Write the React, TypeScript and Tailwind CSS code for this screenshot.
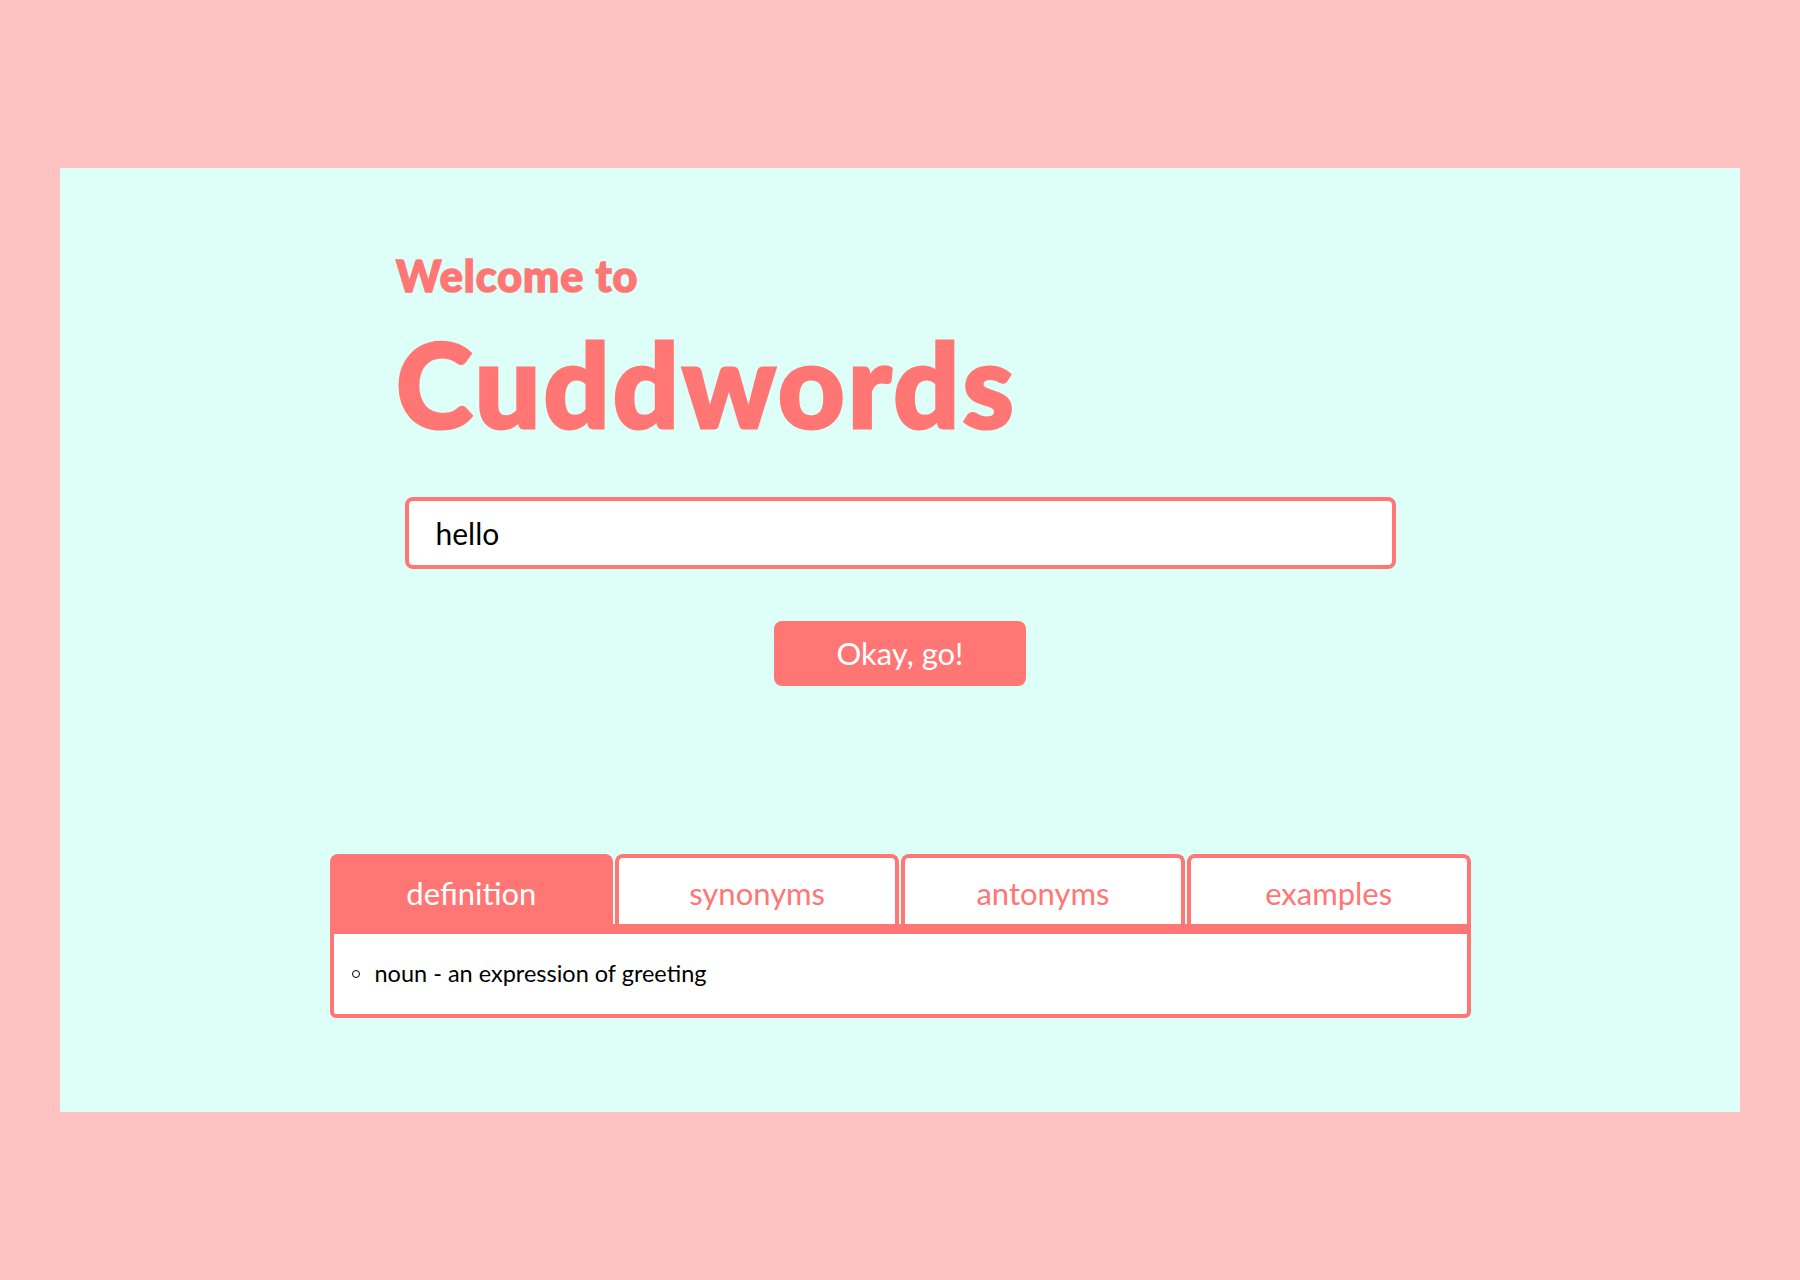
import React from "react";

const tabs = ["definition", "synonyms", "antonyms", "examples"];

const App = () => {
  return (
    <div className="min-h-screen w-full bg-[#ffc2c2] pt-[168px] font-['Lato',sans-serif]">
      {/* main panel */}
      <div className="mx-auto w-[1680px] h-[944px] bg-[#ddfff7] pt-[86px]">
        {/* title */}
        <div className="mx-auto w-[1008px] text-[#ff7675] font-black">
          <h2 className="text-[43px] leading-none tracking-[1px] [-webkit-text-stroke:1.5px_#ff7675]">Welcome to</h2>
          <h1 className="mt-[29px] text-[116px] leading-none tracking-[3px] [-webkit-text-stroke:3px_#ff7675]">Cuddwords</h1>
        </div>

        {/* search */}
        <div className="mx-auto mt-[55px] w-[991px]">
          <input
            defaultValue="hello"
            className="h-[72px] w-full rounded-lg border-4 border-[#ff7675] bg-white px-[27px] text-[30px] text-black outline-none"
          />
        </div>
        <div className="mt-[52px] flex justify-center">
          <button className="h-[65px] w-[252px] rounded-lg bg-[#ff7675] text-[31px] text-white">
            Okay, go!
          </button>
        </div>

        {/* result tabs */}
        <div className="mx-auto mt-[168px] w-[1141px]">
          <div className="flex gap-[2px]">
            {tabs.map((t, i) => (
              <div
                key={t}
                className={
                  i === 0
                    ? "flex h-[70px] flex-1 items-center justify-center rounded-t-lg border-4 border-b-0 border-[#ff7675] bg-[#ff7675] pt-1 text-[31px] text-white"
                    : "flex h-[70px] flex-1 items-center justify-center rounded-t-lg border-4 border-b-0 border-[#ff7675] bg-white pt-1 text-[31px] text-[#ff7675]"
                }
              >
                {t}
              </div>
            ))}
          </div>
          <div className="h-[94px] rounded-b-md border-4 border-t-[10px] border-[#ff7675] bg-white px-[18px]">
            <ul className="flex h-full items-center">
              <li className="flex items-center gap-[15px] text-[23.5px] text-black">
                <span className="h-[8px] w-[8px] rounded-full border-[1.5px] border-black" />
                noun - an expression of greeting
              </li>
            </ul>
          </div>
        </div>
      </div>
    </div>
  );
};

export default App;
